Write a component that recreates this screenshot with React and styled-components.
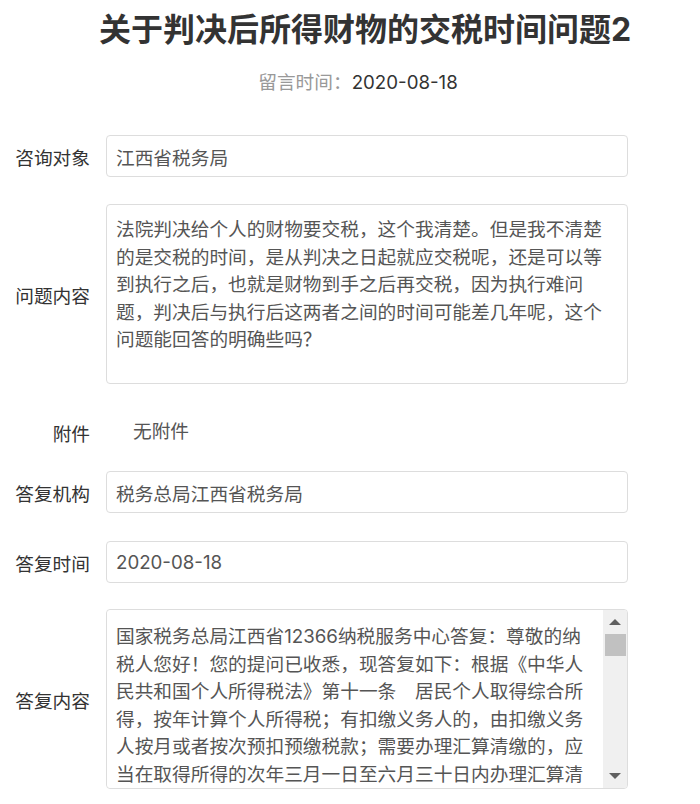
import { useState } from 'react';
import styled, { createGlobalStyle } from 'styled-components';

const FONT = `Inter, "Noto Sans CJK SC", sans-serif`;

const GlobalStyle = createGlobalStyle`
  body {
    margin: 0;
    background: #fff;
    font-family: ${FONT};
    color: #333;
  }
`;

const Page = styled.div`
  width: 700px;
  padding-top: 8px;
`;

const Title = styled.h1`
  margin: 0;
  padding-left: 30px;
  text-align: center;
  font-size: 32px;
  line-height: 44px;
  font-weight: bold;
  color: #333;
  font-family: ${FONT};
`;

const MetaLine = styled.div`
  margin-top: 17px;
  padding-left: 16px;
  text-align: center;
  font-size: 18.7px;
  line-height: 27px;
  color: #333;
`;

const MetaLabel = styled.span`
  color: #999;
`;

const Form = styled.div`
  display: flex;
  flex-direction: column;
  padding-top: 39px;
`;

const Row = styled.div`
  display: grid;
  grid-template-columns: 90px 522px;
  column-gap: 16px;
  align-items: center;
  margin-bottom: ${props => props.$space}px;
`;

const Label = styled.label`
  text-align: right;
  font-size: 18.7px;
  color: #333;
  white-space: nowrap;
`;

const Field = styled.input`
  box-sizing: border-box;
  width: 100%;
  height: 42px;
  margin: 0;
  padding: 0 9px;
  border: 1px solid #ddd;
  border-radius: 4px;
  background: #fff;
  font-family: ${FONT};
  font-size: 18.7px;
  color: #555;
  outline: none;
`;

const Area = styled.textarea`
  box-sizing: border-box;
  display: block;
  width: 100%;
  height: ${props => (props.$framed ? '100%' : '180px')};
  flex: 1;
  min-width: 0;
  margin: 0;
  padding: ${props => (props.$framed ? '13px 9px 10px' : '11px 14px 10px 9px')};
  border: ${props => (props.$framed ? 'none' : '1px solid #ddd')};
  border-radius: 4px;
  background: #fff;
  font-family: ${FONT};
  font-size: 18.7px;
  line-height: 27.5px;
  color: #555;
  resize: none;
  outline: none;
  overflow-y: auto;
  scrollbar-width: none;
`;

/* the answer box draws its own scroll track beside the text */
const ScrollBox = styled.div`
  box-sizing: border-box;
  display: flex;
  height: 180px;
  border: 1px solid #ddd;
  border-radius: 4px;
  overflow: hidden;
  background: #fff;
`;

const Track = styled.div`
  flex: 0 0 24px;
  display: flex;
  flex-direction: column;
  background: #f0f0f0;
`;

const TrackRail = styled.div`
  flex: 1;
  position: relative;
`;

const Thumb = styled.div`
  position: absolute;
  left: 2px;
  right: 1px;
  height: 22px;
  background: #c1c1c1;
`;

const ArrowButton = styled.div`
  flex: 0 0 24px;
  display: flex;
  align-items: center;
  justify-content: center;
`;

const PlainValue = styled.div`
  padding-left: 27px;
  font-size: 18.7px;
  line-height: 42px;
  color: #555;
`;

function Arrow({ down }) {
  return (
    <ArrowButton>
      <svg width="12" height="6" viewBox="0 0 12 6">
        <path d={down ? 'M0 0H12L6 6z' : 'M6 0L12 6H0z'} fill="#606060" />
      </svg>
    </ArrowButton>
  );
}

function ScrollArea({ value }) {
  const [ratio, setRatio] = useState(0);
  const onScroll = e => {
    const t = e.currentTarget;
    const max = t.scrollHeight - t.clientHeight;
    setRatio(max > 0 ? t.scrollTop / max : 0);
  };
  // rail is 178 - 48 = 130px, thumb 22px
  return (
    <ScrollBox>
      <Area $framed readOnly value={value} onScroll={onScroll} />
      <Track>
        <Arrow />
        <TrackRail>
          <Thumb style={{ top: `${ratio * 108}px` }} />
        </TrackRail>
        <Arrow down />
      </Track>
    </ScrollBox>
  );
}

const question =
  '法院判决给个人的财物要交税，这个我清楚。但是我不清楚的是交税的时间，是从判决之日起就应交税呢，还是可以等到执行之后，也就是财物到手之后再交税，因为执行难问题，判决后与执行后这两者之间的时间可能差几年呢，这个问题能回答的明确些吗？';

const answer =
  '国家税务总局江西省12366纳税服务中心答复：尊敬的纳税人您好！您的提问已收悉，现答复如下：根据《中华人民共和国个人所得税法》第十一条　居民个人取得综合所得，按年计算个人所得税；有扣缴义务人的，由扣缴义务人按月或者按次预扣预缴税款；需要办理汇算清缴的，应当在取得所得的次年三月一日至六月三十日内办理汇算清缴。预扣办法由国务院税务主管部门制定。' +
  '居民个人向扣缴义务人提供专项附加扣除信息的，扣缴义务人按月预扣预缴税款时应当按照规定予以扣除，不得拒绝。' +
  '非居民个人取得工资、薪金所得，劳务报酬所得，稿酬所得和特许权使用费所得，有扣缴义务人的，由扣缴义务人按月或者按次代扣代缴税款，不办理汇算清缴。' +
  '第十二条　纳税人取得经营所得，按年计算个人所得税，由纳税人在月度或者季度终了后十五日内向税务机关报送纳税申报表，并预缴税款；在取得所得的次年三月三十一日前办理汇算清缴。' +
  '纳税人取得利息、股息、红利所得，财产租赁所得，财产转让所得和偶然所得，按月或者按次计算个人所得税，有扣缴义务人的，由扣缴义务人按月或者按次代扣代缴税款。' +
  '第十三条　纳税人取得应税所得没有扣缴义务人的，应当在取得所得的次月十五日内向税务机关报送纳税申报表，并缴纳税款。' +
  '纳税人取得应税所得，扣缴义务人未扣缴税款的，纳税人应当在取得所得的次年六月三十日前，缴纳税款；税务机关通知限期缴纳的，纳税人应当按照期限缴纳税款。' +
  '第十四条　扣缴义务人每月或者每次预扣、代扣的税款，应当在次月十五日内缴入国库，并向税务机关报送扣缴个人所得税申报表。' +
  '因此，您通过法院判决取得的财物，应根据所得的具体性质确定适用的所得项目，以实际取得所得的时间确定纳税义务发生时间，并在上述规定的期限内申报缴纳个人所得税。上述回复仅供参考，具体以当地主管税务机关意见为准。感谢您的咨询！';

export default function App() {
  return (
    <>
      <GlobalStyle />
      <Page>
        <Title>关于判决后所得财物的交税时间问题2</Title>
        <MetaLine>
          <MetaLabel>留言时间：</MetaLabel>2020-08-18
        </MetaLine>
        <Form>
          <Row $space={27}>
            <Label>咨询对象</Label>
            <Field readOnly value="江西省税务局" />
          </Row>
          <Row $space={27}>
            <Label>问题内容</Label>
            <Area readOnly value={question} />
          </Row>
          <Row $space={18}>
            <Label>附件</Label>
            <PlainValue>无附件</PlainValue>
          </Row>
          <Row $space={28}>
            <Label>答复机构</Label>
            <Field readOnly value="税务总局江西省税务局" />
          </Row>
          <Row $space={26}>
            <Label>答复时间</Label>
            <Field readOnly value="2020-08-18" />
          </Row>
          <Row $space={0}>
            <Label>答复内容</Label>
            <ScrollArea value={answer} />
          </Row>
        </Form>
      </Page>
    </>
  );
}
